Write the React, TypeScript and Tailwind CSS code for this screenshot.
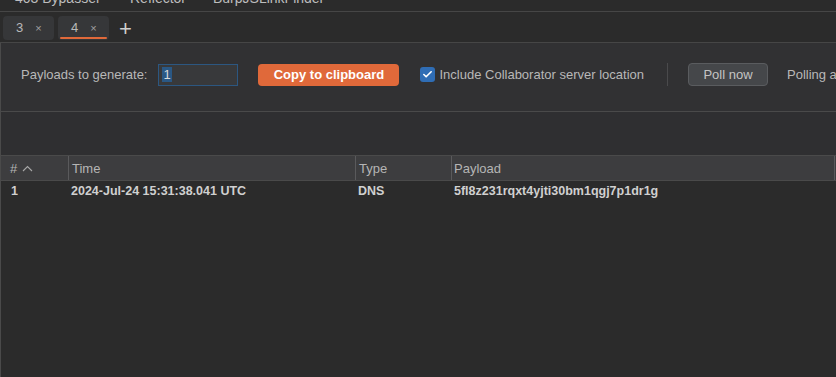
import { Check } from "lucide-react";

const cols = [
  { label: "#", w: "w-[68px]", pad: "pl-[9px]", sort: true },
  { label: "Time", w: "w-[287px]", pad: "pl-[3px]" },
  { label: "Type", w: "w-[96px]", pad: "pl-[3px]" },
  { label: "Payload", w: "w-[383px]", pad: "pl-[2px]" },
];

function Tab({ n, active }: { n: string; active?: boolean }) {
  return (
    <div className="relative flex h-[24px] w-[51px] shrink-0 items-center rounded-[4px] bg-[#363739] pl-[13px] text-[13px] text-[#b9b9b9]">
      <span>{n}</span>
      <span className="ml-[12px] text-[11px] text-[#a0a0a0]">×</span>
      {active && (
        <div className="absolute bottom-[1px] left-[2px] right-[2px] h-[2px] rounded-full bg-[#e0693a]" />
      )}
    </div>
  );
}

export default function App() {
  return (
    <div
      className="flex h-[377px] w-[836px] flex-col overflow-hidden bg-[#2b2b2b] text-[#c4c4c4]"
      style={{ fontFamily: '"Liberation Sans", Arial, sans-serif' }}
    >
      {/* top tool tabs, mostly scrolled off */}
      <div className="h-[12px] shrink-0 overflow-hidden border-b border-[#464646]">
        <div className="mt-[-10px] flex whitespace-nowrap text-[14px] leading-4 text-[#bdbdbd]">
          <span className="ml-[15px] w-[115px]">403 Bypasser</span>
          <span className="w-[83px]">Reflector</span>
          <span>BurpJSLinkFinder</span>
        </div>
      </div>

      {/* sub tabs */}
      <div className="flex h-[31px] shrink-0 items-start gap-[4px] border-b border-[#464646] pl-[3px] pt-[4px]">
        <Tab n="3" />
        <Tab n="4" active />
        <span className="ml-[6px] mt-[2px] text-[22px] font-light leading-none text-[#cfcfcf]">+</span>
      </div>

      <div className="flex flex-1 flex-col border-l border-[#4a4a4a]">
        {/* config panel */}
        <div className="flex h-[69px] shrink-0 items-center whitespace-nowrap border-b border-[#4a4a4a] bg-[#313133] pb-[5px] pl-[20px] text-[13px] text-[#b8b8b8]">
          <span className="shrink-0">Payloads to generate:</span>
          <div className="ml-[11px] flex h-[22px] w-[80px] shrink-0 items-center border border-[#2c5781] bg-[#38393b] pl-[3px]">
            <span className="bg-[#2a5885] px-[1px] text-[13px] leading-[15px] text-[#d8d8d8]">1</span>
          </div>
          <button className="ml-[20px] h-[22px] w-[141px] shrink-0 rounded-[4px] bg-[#e0693a] text-[13px] font-bold text-white">
            Copy to clipboard
          </button>
          <div className="ml-[21px] flex h-[15px] w-[15px] shrink-0 items-center justify-center rounded-[3px] bg-[#2f6db5]">
            <Check className="h-[11px] w-[11px] text-white" strokeWidth={3.5} />
          </div>
          <span className="ml-[4px] shrink-0">Include Collaborator server location</span>
          <div className="ml-[23px] h-[23px] w-px shrink-0 bg-[#4a4a4c]" />
          <button className="ml-[20px] h-[23px] w-[80px] shrink-0 rounded-[4px] border border-[#5a5c5f] bg-[#45474a] text-[13px] text-[#c4c4c4]">
            Poll now
          </button>
          <span className="ml-[19px] shrink-0">Polling automatically</span>
        </div>

        {/* empty filter area */}
        <div className="h-[44px] shrink-0 border-b border-[#4a4a4a] bg-[#2f2f31]" />

        {/* table */}
        <div className="flex h-[25px] shrink-0 border-b border-[#4a4a4a] bg-[#3d3d3f] text-[13px] text-[#b5b5b5]">
          {cols.map((c) => (
            <div
              key={c.label}
              className={`${c.w} ${c.pad} flex shrink-0 items-center border-r border-[#5a5a5c] pt-[1px]`}
            >
              <span>{c.label}</span>
              {c.sort && (
                <svg width="11" height="7" viewBox="0 0 11 7" className="ml-[5px]">
                  <path d="M1 6 L5.5 1.5 L10 6" fill="none" stroke="#a8a8a8" strokeWidth="1.1" />
                </svg>
              )}
            </div>
          ))}
        </div>
        <div className="flex h-[20px] shrink-0 items-center whitespace-nowrap pt-[1px] text-[12.5px] font-bold text-[#d0d0d0]">
          <span className="w-[68px] shrink-0 pl-[10px]">1</span>
          <span className="w-[287px] shrink-0 pl-[2px]">2024-Jul-24 15:31:38.041 UTC</span>
          <span className="w-[96px] shrink-0 pl-[2px]">DNS</span>
          <span className="pl-[2px]">5fl8z231rqxt4yjti30bm1qgj7p1dr1g</span>
        </div>
        <div className="flex-1 bg-[#2b2b2b]" />
      </div>
    </div>
  );
}
